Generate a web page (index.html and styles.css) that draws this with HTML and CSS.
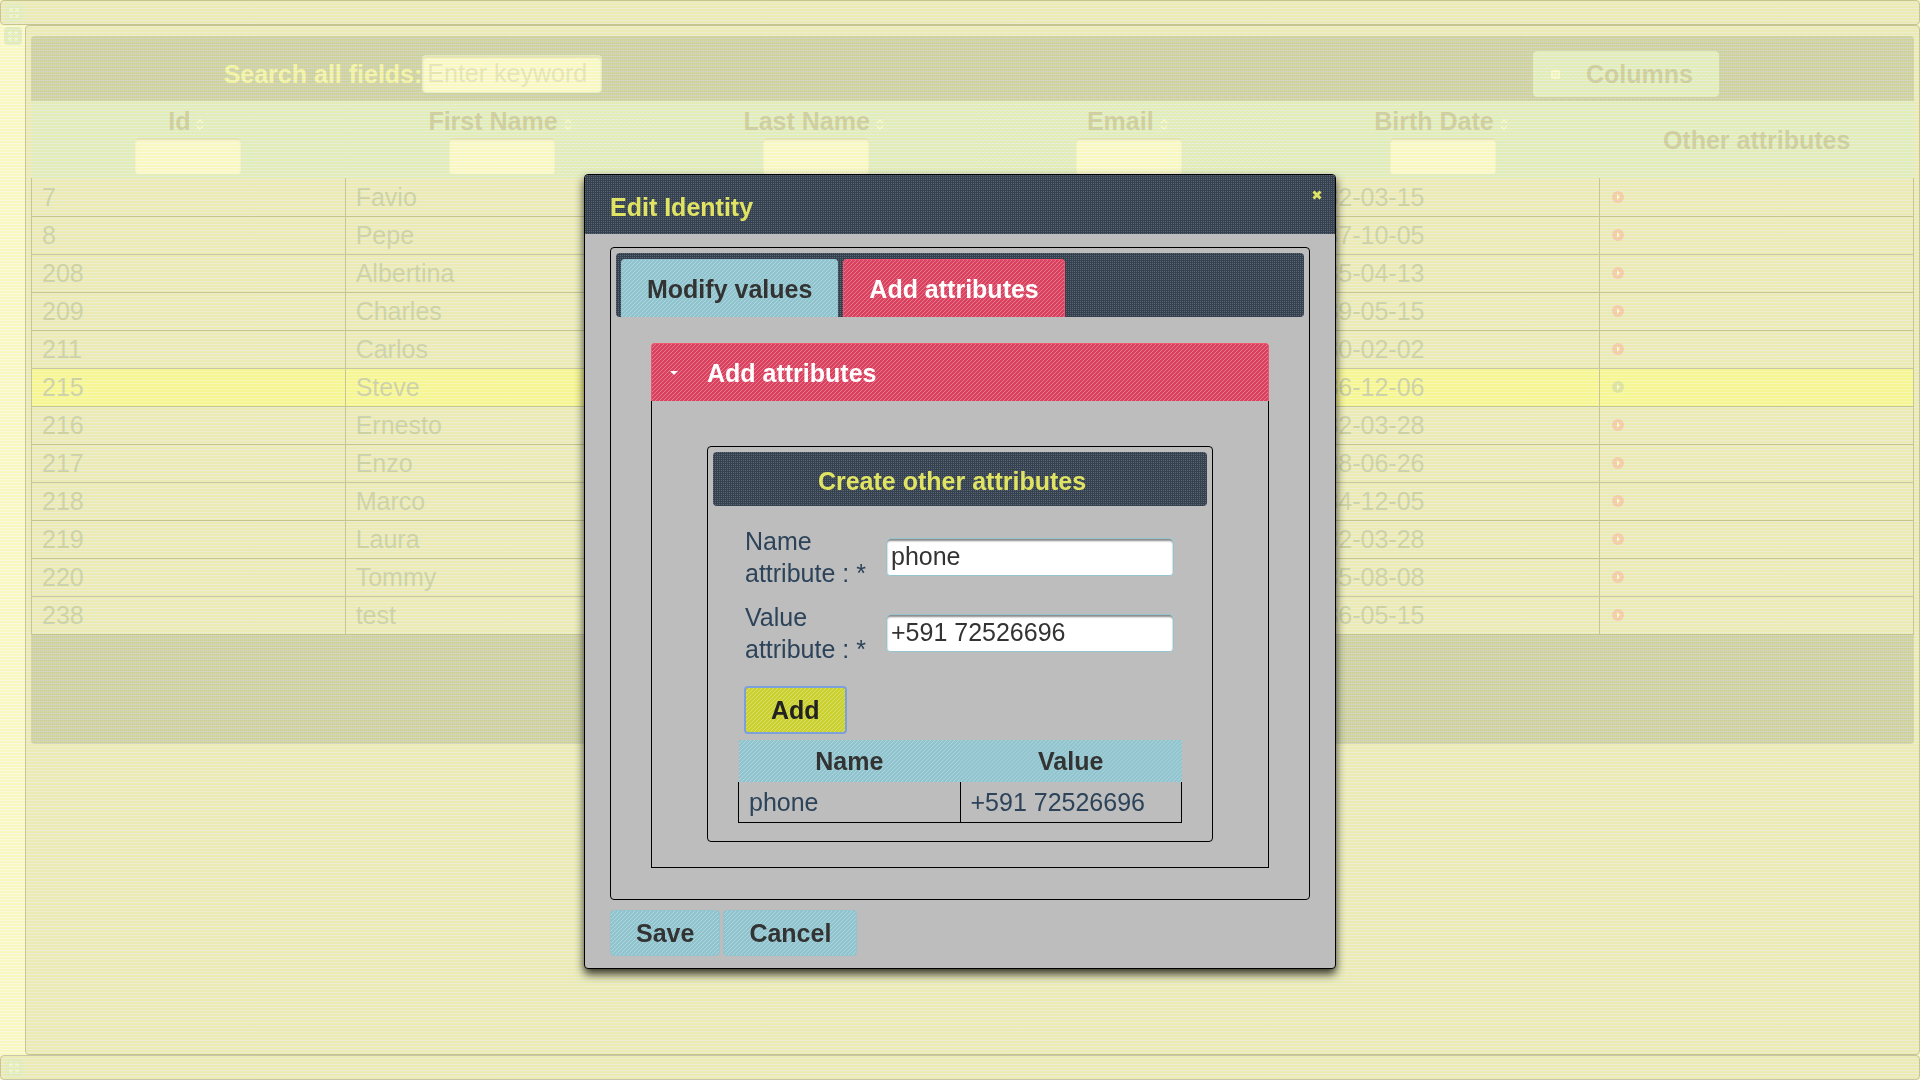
FILE: index.html
```html
<!DOCTYPE html>
<html lang="en">
<head>
<meta charset="utf-8">
<title>Identities</title>
<link rel="stylesheet" href="styles.css">
</head>
<body>
<svg class="sprite" aria-hidden="true">
  <symbol id="expand" viewBox="0 0 16 16"><path d="M4 7V4h3M9 4h3v3M12 9v3H9M7 12H4V9M4 4l3 3M12 4L9 7M12 12L9 9M4 12l3-3" fill="none" stroke="#fff" stroke-width="1"/></symbol>
  <symbol id="sort" viewBox="0 0 16 16"><path d="M5 7l3-3 3 3M5 10l3 3 3-3" fill="none" stroke="#fff" stroke-width="1.500"/></symbol>
  <symbol id="go" viewBox="0 0 12 12"><circle cx="6" cy="6" r="6"/><path d="M5 3l3 3-3 3z" class="go-arrow"/></symbol>
</svg>
<div class="app">
  <header class="bar"><button class="toggler" aria-label="Toggle header"><svg class="icon"><use href="#expand"/></svg></button></header>
  <div class="middle">
    <div class="rail"><button class="toggler" aria-label="Toggle menu"><svg class="icon"><use href="#expand"/></svg></button></div>
    <main class="content">
      <div class="tools dots">
        <div class="search"><label for="q">Search all fields:</label><input id="q" class="field" placeholder="Enter keyword"></div>
        <button class="btn stripes columns"><svg class="icon" viewBox="0 0 16 16"><rect x="3" y="4" width="9" height="9" rx="2" fill="#fff"/><path d="M6 6v5M9 6v5" stroke="#94c4cf" /></svg><span>Columns</span></button>
      </div>
      <table class="people">
        <thead class="stripes"><tr>
          <th><span class="sorter">Id<svg class="icon"><use href="#sort"/></svg></span><input class="field" aria-label="Filter Id"></th>
          <th><span class="sorter">First Name<svg class="icon"><use href="#sort"/></svg></span><input class="field" aria-label="Filter First Name"></th>
          <th><span class="sorter">Last Name<svg class="icon"><use href="#sort"/></svg></span><input class="field" aria-label="Filter Last Name"></th>
          <th><span class="sorter">Email<svg class="icon"><use href="#sort"/></svg></span><input class="field" aria-label="Filter Email"></th>
          <th><span class="sorter">Birth Date<svg class="icon"><use href="#sort"/></svg></span><input class="field" aria-label="Filter Birth Date"></th>
          <th>Other attributes</th>
        </tr></thead>
        <tbody>
          <tr><td>7</td><td>Favio</td><td></td><td></td><td>1982-03-15</td><td><svg class="go"><use href="#go"/></svg></td></tr>
          <tr><td>8</td><td>Pepe</td><td></td><td></td><td>1987-10-05</td><td><svg class="go"><use href="#go"/></svg></td></tr>
          <tr><td>208</td><td>Albertina</td><td></td><td></td><td>1985-04-13</td><td><svg class="go"><use href="#go"/></svg></td></tr>
          <tr><td>209</td><td>Charles</td><td></td><td></td><td>1989-05-15</td><td><svg class="go"><use href="#go"/></svg></td></tr>
          <tr><td>211</td><td>Carlos</td><td></td><td></td><td>1980-02-02</td><td><svg class="go"><use href="#go"/></svg></td></tr>
          <tr class="selected"><td>215</td><td>Steve</td><td></td><td></td><td>1986-12-06</td><td><svg class="go"><use href="#go"/></svg></td></tr>
          <tr><td>216</td><td>Ernesto</td><td></td><td></td><td>1982-03-28</td><td><svg class="go"><use href="#go"/></svg></td></tr>
          <tr><td>217</td><td>Enzo</td><td></td><td></td><td>1988-06-26</td><td><svg class="go"><use href="#go"/></svg></td></tr>
          <tr><td>218</td><td>Marco</td><td></td><td></td><td>1984-12-05</td><td><svg class="go"><use href="#go"/></svg></td></tr>
          <tr><td>219</td><td>Laura</td><td></td><td></td><td>1982-03-28</td><td><svg class="go"><use href="#go"/></svg></td></tr>
          <tr><td>220</td><td>Tommy</td><td></td><td></td><td>1985-08-08</td><td><svg class="go"><use href="#go"/></svg></td></tr>
          <tr><td>238</td><td>test</td><td></td><td></td><td>1986-05-15</td><td><svg class="go"><use href="#go"/></svg></td></tr>
        </tbody>
      </table>
      <div class="table-foot dots"></div>
    </main>
  </div>
  <footer class="bar"><button class="toggler" aria-label="Toggle footer"><svg class="icon"><use href="#expand"/></svg></button></footer>
</div>

<div class="overlay">
  <section class="dialog" role="dialog" aria-labelledby="dialog-title">
    <div class="dialog-title dots">
      <h1 id="dialog-title">Edit Identity</h1>
      <button class="close" aria-label="Close"><svg class="icon" viewBox="0 0 16 16"><path d="M4.500 4.500l7 7M11.500 4.500l-7 7" stroke="#e1e463" stroke-width="3"/></svg></button>
    </div>
    <div class="dialog-body">
      <div class="tabs">
        <div class="tab-nav dots">
          <button class="tab stripes">Modify values</button>
          <button class="tab stripes active">Add attributes</button>
        </div>
        <div class="tab-panel">
          <button class="accordion-head stripes active"><svg class="icon" viewBox="0 0 16 16"><path d="M4 6h8l-4 4z" fill="#fff"/></svg><span>Add attributes</span></button>
          <div class="accordion-body">
            <form class="create">
              <h2 class="dots">Create other attributes</h2>
              <div class="form-grid">
                <label for="name">Name attribute : *</label><input id="name" class="field" value="phone">
                <label for="value">Value attribute : *</label><input id="value" class="field" value="+591 72526696">
              </div>
              <button type="button" class="btn stripes add">Add</button>
              <table class="attrs">
                <thead class="stripes"><tr><th>Name</th><th>Value</th></tr></thead>
                <tbody><tr><td>phone</td><td>+591 72526696</td></tr></tbody>
              </table>
            </form>
          </div>
        </div>
      </div>
      <div class="actions">
        <button class="btn stripes">Save</button>
        <button class="btn stripes">Cancel</button>
      </div>
    </div>
  </section>
</div>
</body>
</html>
```
FILE: styles.css
```css
* { box-sizing: border-box; }
body {
  margin: 0;
  background: #fff;
  color: #2c4359;
  font: 25px/30px "Liberation Sans", Arial, sans-serif;
}
button, input { font: inherit; margin: 0; }
.sprite { display: none; }
.icon { display: block; width: 16px; height: 16px; flex: none; }

/* textures */
.dots {
  background-color: #35414f;
  background-image: conic-gradient(transparent 75%, #5a6673 0);
  background-size: 2px 2px;
}
.stripes {
  background-color: #8fc3cd;
  background-image: linear-gradient(135deg, transparent 44%, rgba(255, 255, 255, .3) 44% 56%, transparent 56%);
  background-size: 4px 4px;
}

/* page layout */
.app { display: flex; flex-direction: column; min-height: 100vh; }
.bar {
  height: 25px;
  padding: 3px 4px;
  border: 1px solid #000;
  border-radius: 4px;
  background: #bdbdbd;
}
.middle { flex: 1; display: flex; }
.rail { width: 25px; padding: 2px 4px; }
.toggler {
  display: block;
  width: 18px;
  height: 18px;
  padding: 1px;
  border: 0;
  border-radius: 4px;
  background: #94c4cf;
}
.content {
  flex: 1;
  padding: 10px 5px;
  border: 1px solid #000;
  border-radius: 4px;
  background: #bdbdbd;
}
.tools {
  display: grid;
  grid-template-columns: 764fr 543fr 576fr;
  align-items: center;
  height: 65px;
  padding-top: 11px;
  border-radius: 4px 4px 0 0;
}
.search {
  display: flex;
  justify-content: center;
  align-items: center;
  color: #e1e463;
  font-weight: bold;
}
.field {
  height: 38px;
  padding: 0 4px 2px;
  border: 1px solid #94c4cf;
  border-radius: 4px;
  background: #fff;
  box-shadow: inset 0 2px 2px #8a8a8a;
  color: #333;
  font-weight: normal;
}
.field::placeholder { color: #a0a0a0; opacity: 1; }
.search .field { width: 180px; }
.btn {
  height: 46px;
  padding: 0 25px;
  border: 1px solid #94c4cf;
  border-radius: 4px;
  color: #333;
  font-weight: bold;
}
.columns {
  grid-column: 3;
  justify-self: center;
  display: flex;
  align-items: center;
  gap: 22px;
  padding: 0 25px 0 14px;
}

.people, .attrs { width: 100%; table-layout: fixed; border-collapse: collapse; }
.people th { height: 77px; padding: 0; color: #333; vertical-align: middle; }
.people th .field { display: block; width: 108px; margin: 0 auto; }
.sorter { display: flex; justify-content: center; align-items: center; gap: 2px; height: 32px; }
.sorter .icon { margin-top: 6px; }
.people td { height: 38px; padding: 0 10px; border: 1px solid #000; border-top: 0; }
.go { display: block; width: 12px; height: 12px; margin-left: 2px; fill: #e0305f; }
.go-arrow { fill: #fff; }
.selected { background: #f5f51f; }
.selected .go { fill: #7a9a3a; }
.table-foot { height: 109px; border-radius: 0 0 4px 4px; }

/* modal layer */
.overlay {
  position: fixed;
  inset: 0;
  display: flex;
  justify-content: center;
  align-items: flex-start;
  padding-top: 174px;
  background: repeating-linear-gradient(rgba(246, 246, 176, .8) 0 2px, rgba(247, 247, 216, .8) 2px 3px);
}
.dialog {
  width: 752px;
  border: 1px solid #000;
  border-radius: 4px;
  background: #bdbdbd;
  box-shadow: 0 5px 10px rgba(0, 0, 0, .8);
}
.dialog-title {
  display: flex;
  justify-content: space-between;
  padding: 12px 10px 0 25px;
  height: 59px;
  border-radius: 3px 3px 0 0;
}
h1, h2 { margin: 0; color: #e1e463; font-size: 25px; line-height: 42px; font-weight: bold; }
h1 { line-height: 40px; }
.close { align-self: flex-start; padding: 0; border: 0; background: none; }
.dialog-body { padding: 13px 25px 12px; }
.tabs { padding: 5px 5px 31px; border: 1px solid #000; border-radius: 4px; }
.tab-nav {
  display: flex;
  gap: 5px;
  height: 64px;
  padding: 6px 5px 0;
  border-radius: 4px;
}
.tab {
  padding: 1px 25px 0;
  border: 1px solid #94c4cf;
  border-bottom: 0;
  border-radius: 4px 4px 0 0;
  color: #333;
  font-weight: bold;
}
.active { background-color: #d9415f; border: 1px solid #f5566f; color: #fff; }
.tab.active { border-bottom: 0; }
.tab-panel { padding: 26px 35px 0; }
.accordion-head {
  display: flex;
  align-items: center;
  gap: 25px;
  width: 100%;
  height: 58px;
  padding: 0 14px;
  border-bottom: 0;
  border-radius: 4px 4px 0 0;
  font-weight: bold;
}
.accordion-body { padding: 45px 55px 25px; border: 1px solid #000; border-top: 0; }
.create { padding: 5px 5px 18px; border: 1px solid #000; border-radius: 4px; }
h2 { height: 54px; padding: 8px 16px 0 0; border-radius: 4px; text-align: center; }
.form-grid {
  display: grid;
  grid-template-columns: 129px 288px;
  column-gap: 12px;
  row-gap: 12px;
  align-items: center;
  padding: 19px 32px 21px;
  line-height: 32px;
}
.form-grid .field { width: 100%; }
.add {
  display: block;
  margin-left: 31px;
  height: 48px;
  border: 2px solid #7ba0dc;
  background-color: #cad02e;
  color: #222;
}
.attrs { width: 444px; margin: 6px 0 0 25px; }
.attrs th { height: 42px; padding: 0; color: #333; }
.attrs td { height: 40px; padding: 0 10px; border: 1px solid #000; border-top: 0; }
.actions { display: flex; gap: 3px; padding-top: 10px; }
```
